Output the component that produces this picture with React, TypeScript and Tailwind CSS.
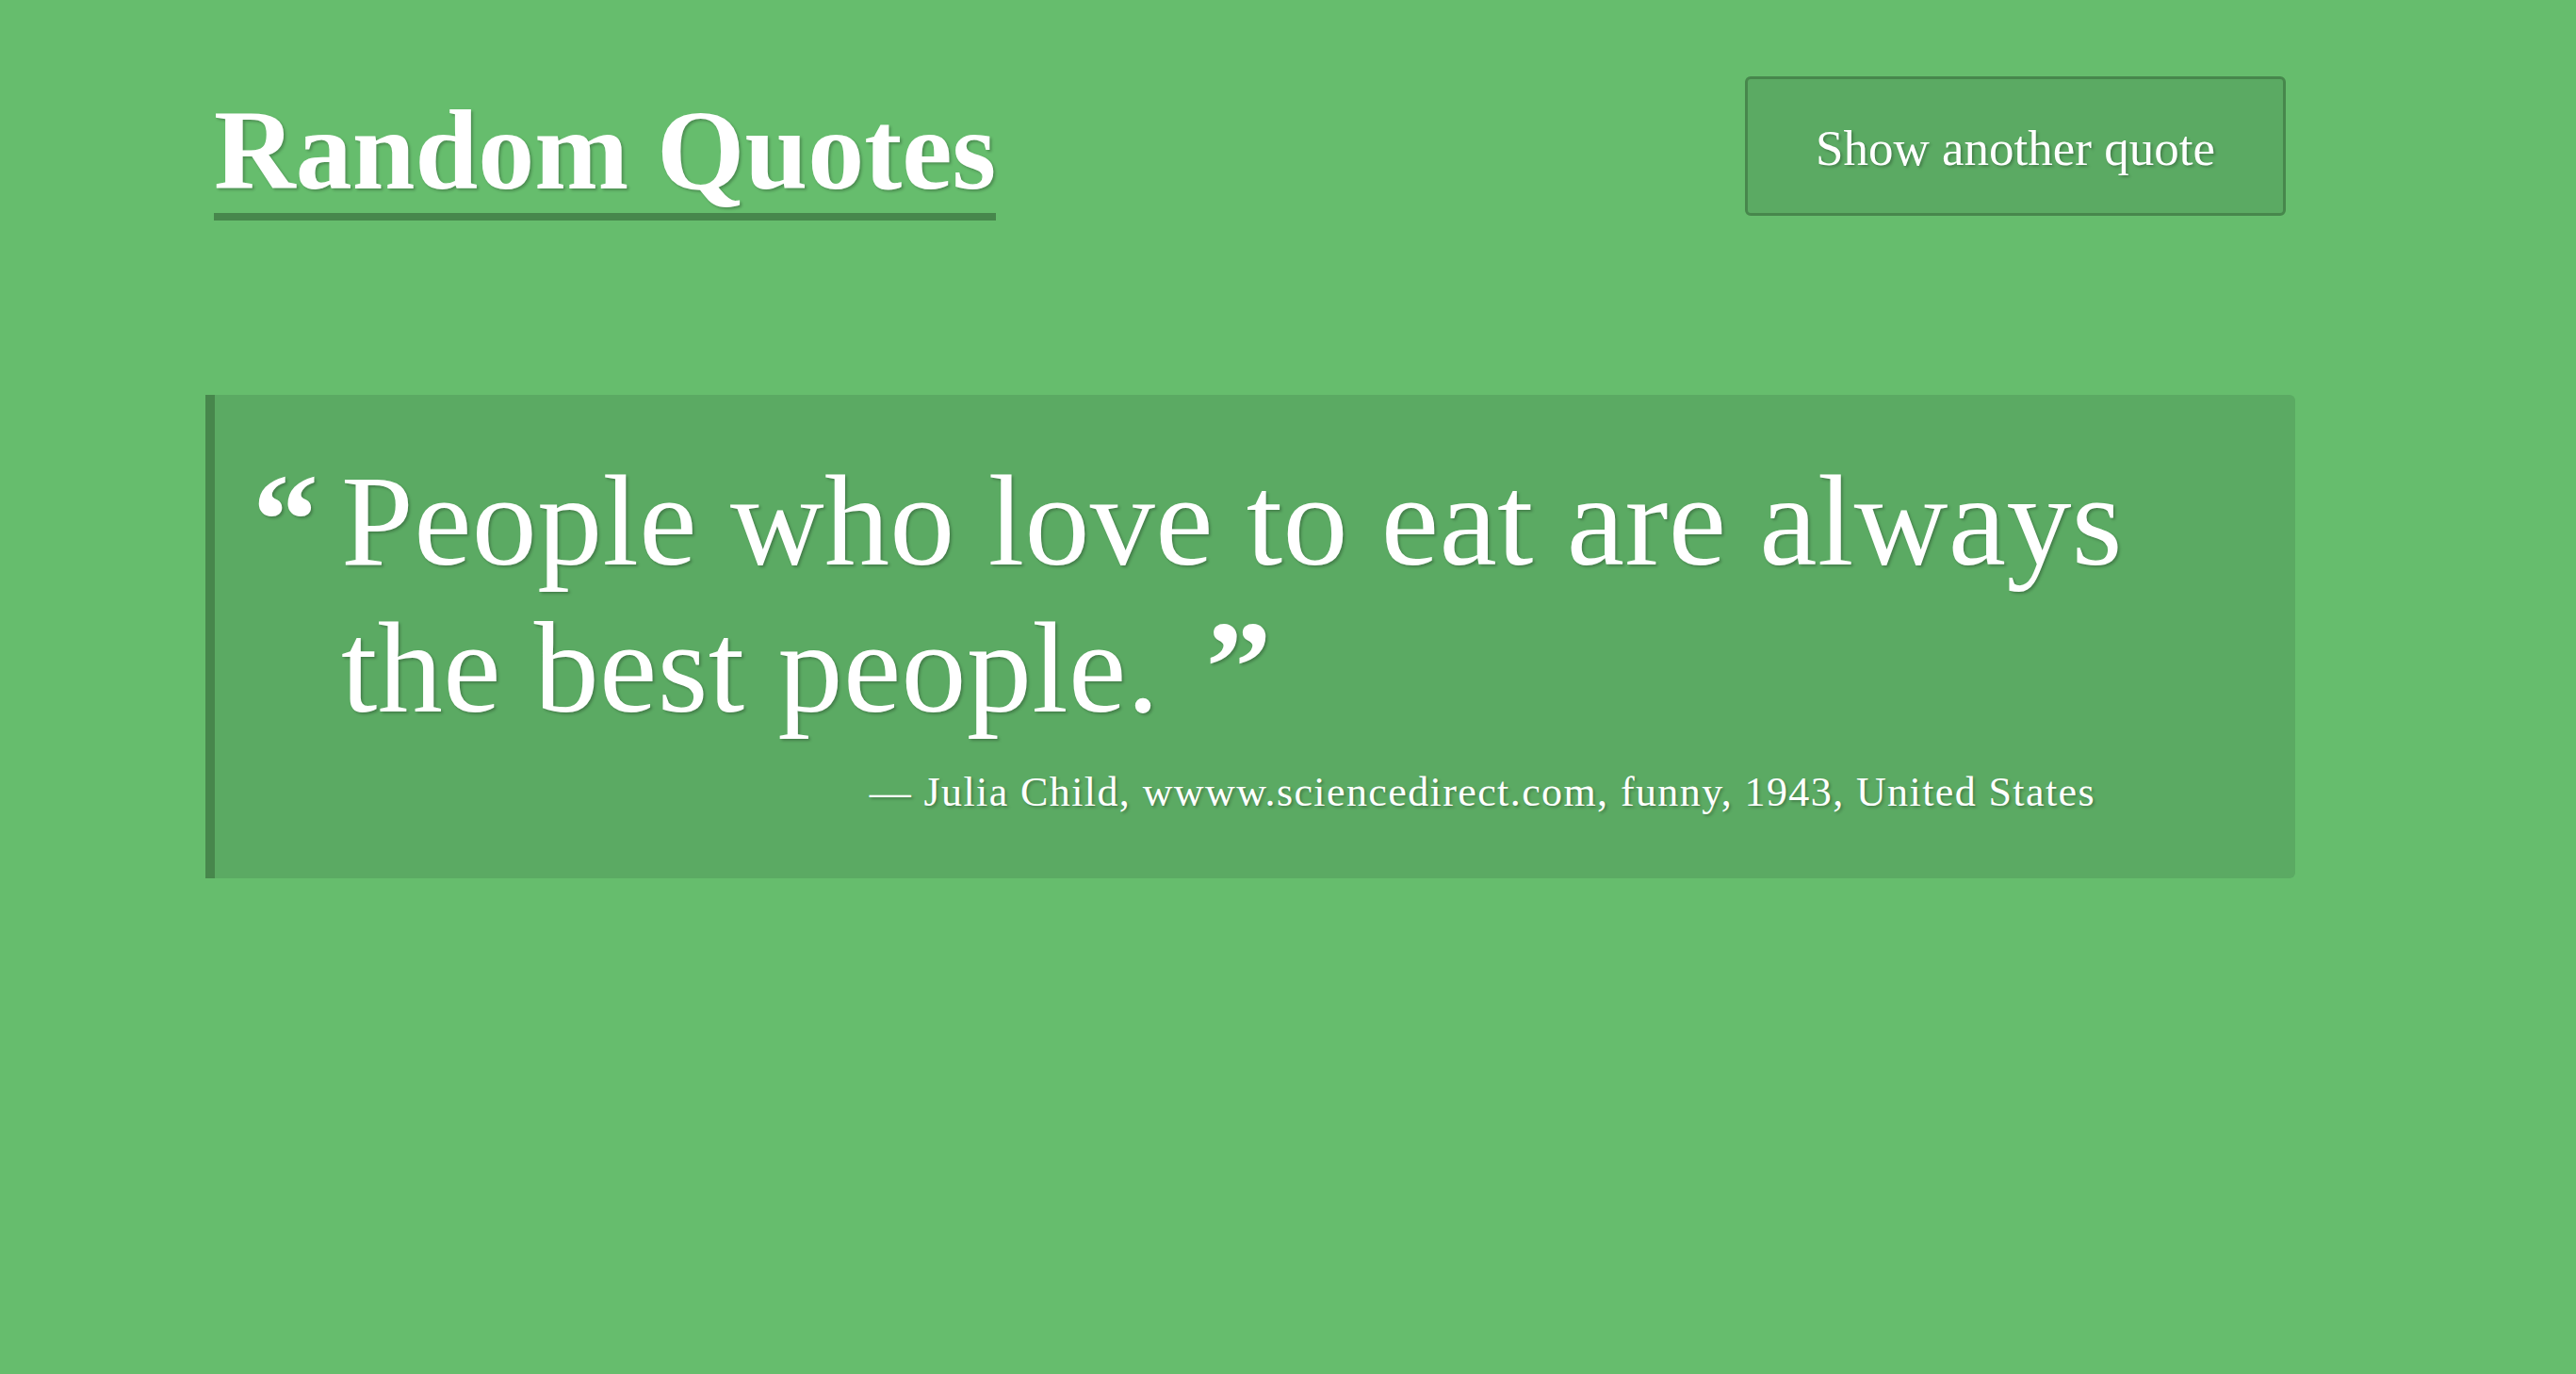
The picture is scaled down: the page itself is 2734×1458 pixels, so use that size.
import React from "react";

const quote = {
  text: "People who love to eat are always the best people.",
  author: "Julia Child",
  source: "wwww.sciencedirect.com",
  tag: "funny",
  year: 1943,
  country: "United States",
};

const shadow = "[text-shadow:2px_2px_3px_rgba(0,0,0,0.25)]";

const App: React.FC = () => {
  return (
    <div className="min-h-screen w-full bg-[#66bd6d] text-white font-['Liberation_Serif',serif]">
      <div className="ml-[218px] w-[2218px]">
        <header className="flex items-start justify-between pt-[81px] pl-[9px] pr-[10px]">
          <h1
            className={`mt-[19px] text-[120px] font-bold leading-none pb-[6px] border-b-[8px] border-[#47874c] ${shadow}`}
          >
            Random Quotes
          </h1>
          <button
            className={`w-[574px] h-[148px] pt-[4px] flex items-center justify-center rounded-md border-[3px] border-[#47874c] bg-[#5baa63] text-[53px] leading-none ${shadow}`}
          >
            Show another quote
          </button>
        </header>

        <section className="mt-[185px] rounded-r-md border-l-[10px] border-[#47874c] bg-[#5baa63] pt-[55px] pb-[60px] pl-[40px] pr-[40px]">
          <div className="flex items-baseline gap-[24px]">
            <span className={`w-[70px] shrink-0 text-[140px] font-bold leading-[155px] ${shadow}`}>
              “
            </span>
            <p className={`flex-1 text-[138px] leading-[155px] tracking-[0.4px] ${shadow}`}>
              {quote.text}{" "}
              <span className="ml-[14px] text-[140px] font-bold leading-[155px]">”</span>
            </p>
          </div>
          <div
            className={`mt-[23px] pr-[172px] text-right text-[44px] leading-[63px] tracking-[1.4px] ${shadow}`}
          >
            — {quote.author}, {quote.source}, {quote.tag}, {quote.year}, {quote.country}
          </div>
        </section>
      </div>
    </div>
  );
};

export default App;
